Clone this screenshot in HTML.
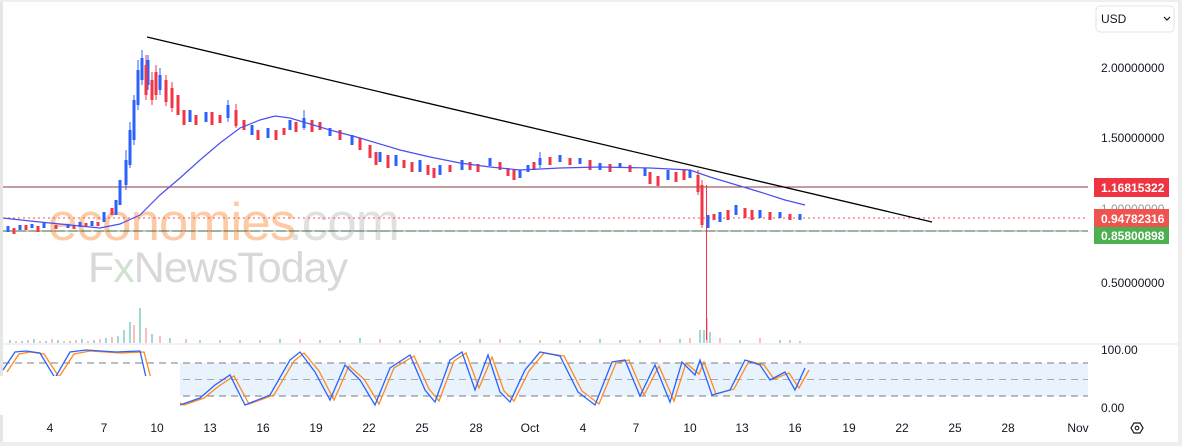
<!DOCTYPE html>
<html><head><meta charset="utf-8"><style>
html,body{margin:0;padding:0;background:#fff;width:1182px;height:446px;overflow:hidden;font-family:"Liberation Sans",Arial,sans-serif}
svg{position:absolute;left:0;top:0}
</style></head><body>
<svg width="1182" height="446" xmlns="http://www.w3.org/2000/svg" font-family="Liberation Sans, Arial, sans-serif">
<rect x="0" y="0" width="3" height="446" fill="#e6e6e6"/>
<rect x="0" y="0" width="1182" height="2" fill="#eee"/>
<rect x="1178" y="0" width="4" height="446" fill="#eee"/>
<rect x="0" y="442" width="1182" height="4" fill="#eee"/>
<line x1="3" y1="344" x2="1178" y2="344" stroke="#e0e3eb"/>
<rect x="180" y="363" width="908" height="33" fill="#e8f3fd"/>
<line x1="3" y1="363" x2="1088" y2="363" stroke="#787b86" stroke-dasharray="7,5"/>
<line x1="3" y1="379.5" x2="1088" y2="379.5" stroke="#aaa" stroke-dasharray="7,5"/>
<line x1="3" y1="396" x2="1088" y2="396" stroke="#787b86" stroke-dasharray="7,5"/>
<!-- volume -->
<path fill="none" stroke="#80cbc4" stroke-width="1.5" d="M10 343V340M22 343V341M34 343V339M46 343V341M58 343V340M70 343V341M82 343V339M94 343V340M106 343V338M118 343V336M124 343V330M130 343V322M140 343V308M152 343V334M170 343V338M200 343V340M240 343V340M280 343V339M320 343V340M360 343V338M400 343V340M440 343V340M480 343V339M520 343V340M560 343V340M600 343V339M640 343V340M680 343V339M700 343V330M704 343V330M710 343V332M740 343V340M780 343V340M800 343V341"/>
<path fill="none" stroke="#f7a9a7" stroke-width="1.5" d="M16 343V341M28 343V340M40 343V341M52 343V339M64 343V341M76 343V340M88 343V341M100 343V339M112 343V337M134 343V325M146 343V328M160 343V336M186 343V339M220 343V340M260 343V340M300 343V339M340 343V340M380 343V339M420 343V340M460 343V340M500 343V339M540 343V340M580 343V340M620 343V340M660 343V339M690 343V338M707 343V318M720 343V338M760 343V338M790 343V340"/>
<!-- stoch -->
<polyline fill="none" stroke="#ff8a1e" stroke-width="1.3" points="7,372 19,354 30,352 44,354 59,377 74,354 90,351 120,353 144,352 154,390 184,405 204,398 219,386 234,376 249,404 274,395 294,361 304,353 319,371 334,400 349,366 364,379 379,404 394,368 414,356 429,389 439,401 454,361 466,353 479,388 492,357 504,391 514,401 529,371 544,353 564,356 582,391 599,404 616,363 629,360 644,395 659,366 674,401 686,363 699,374 704,362 716,394 734,389 749,361 764,365 774,379 789,373 799,388 809,370"/>
<polyline fill="none" stroke="#2962ff" stroke-width="1.3" points="3,370 15,352 26,351 40,353 55,378 70,352 86,350 116,352 140,351 150,395 180,405 200,398 215,385 230,375 245,405 270,395 290,360 300,352 315,372 330,400 345,365 360,380 375,405 390,368 410,355 425,390 435,402 450,360 462,352 475,390 488,355 500,392 510,402 525,370 540,352 560,356 578,392 595,405 612,362 625,360 640,396 655,365 670,402 682,362 695,375 700,360 712,395 730,390 745,360 760,365 770,380 785,372 795,390 805,368"/>
<rect x="0" y="376" width="180" height="39" fill="#fff"/>
<g opacity="0.45">
<text x="48" y="240" font-size="53" fill="#fb8c3c" letter-spacing="-1">economies</text>
<text x="288" y="240" font-size="53" fill="#bbb" letter-spacing="-1">.com</text>
<text x="88" y="282" font-size="43" fill="#aaa" letter-spacing="-1">F<tspan fill="#9ac09a">x</tspan>NewsToday</text>
</g>
<line x1="3" y1="187" x2="1088" y2="187" stroke="#e03b45"/>
<line x1="3" y1="218" x2="1088" y2="218" stroke="#ef5350" stroke-dasharray="2,3"/>
<line x1="3" y1="231" x2="1088" y2="231" stroke="#43a047" stroke-dasharray="10,3"/>
<line x1="3" y1="187" x2="1088" y2="187" stroke="#333" stroke-opacity="0.5"/>
<line x1="3" y1="231" x2="1088" y2="231" stroke="#333" stroke-opacity="0.5"/>
<!-- wicks -->
<path fill="none" stroke="#2962ff" stroke-width="1" d="M126 150V190M130 122V168M134 95V145M138 60V110M142 50V85M148 55V90M160 68V95M228 100V122M304 110V130M540 152V168"/>
<path fill="none" stroke="#f23645" stroke-width="1" d="M146 55V100M152 72V105M156 65V100M166 75V106M172 82V112M236 104V128M698 170V195M702 180V228M706.5 185V340"/>
<!-- bodies -->
<path fill="none" stroke="#2962ff" stroke-width="3" d="M8 226V232M20 225V230M32 224V228M44 223V228M68 224V228M80 222V227M92 221V226M104 212V222M116 200V215M120 180V205M126 160V185M130 130V165M134 100V140M138 70V105M142 58V80M148 60V85M160 75V90M190 110V122M206 112V122M228 105V118M252 125V135M268 128V138M290 120V130M304 118V128M330 128V136M352 135V145M380 152V162M396 155V166M420 160V172M440 165V175M462 160V170M490 158V166M520 170V178M528 165V172M540 158V165M560 155V162M580 158V164M600 163V170M620 163V168M645 168V176M668 170V180M690 170V178M708 215V228M720 212V222M736 205V215M760 210V218M780 212V218M800 214V220"/>
<path fill="none" stroke="#f23645" stroke-width="3" d="M14 228V234M26 225V230M38 226V232M56 225V229M74 225V229M86 223V227M98 222V226M112 208V215M146 65V95M152 80V100M156 72V95M166 80V102M172 88V108M178 95V115M184 110V125M196 115V125M212 112V125M220 115V123M236 110V126M244 120V130M258 130V140M276 130V140M284 128V135M296 122V132M312 120V132M320 122V130M340 130V140M360 138V150M370 145V158M376 152V165M388 155V168M404 160V168M412 162V172M428 165V175M434 168V178M450 165V172M470 162V170M478 164V172M500 162V170M508 168V176M514 170V180M534 162V170M550 157V165M570 158V165M590 160V170M610 164V172M630 165V172M650 172V184M658 176V186M676 172V182M684 170V180M698 175V192M702 185V225M714 214V220M728 210V220M745 208V218M752 210V220M770 212V220M790 214V220"/>
<polyline fill="none" stroke="#4b4ff0" stroke-width="1.2" points="3,218 30,221 60,224 100,228 120,224 140,215 160,195 180,178 200,160 220,143 240,128 260,120 275,116 290,118 310,124 330,130 360,138 400,150 430,157 460,163 490,167 520,170 560,168 600,167 650,168 690,170 710,177 730,183 760,192 785,200 805,205"/>
<line x1="147" y1="37" x2="932" y2="222" stroke="#000" stroke-width="1.3"/>
<rect x="1096" y="6" width="78" height="26" rx="4" fill="#fff" stroke="#e0e3eb"/>
<text x="1101" y="23" font-size="12" fill="#131722">USD</text>
<path d="M1164 17l3 3 3-3" fill="none" stroke="#131722" stroke-width="1.2"/>
<g font-size="12" fill="#131722">
<text x="1101" y="72">2.00000000</text>
<text x="1101" y="142">1.50000000</text>
<text x="1101" y="287">0.50000000</text>
<text x="1101" y="213" fill="#999">1.00000000</text>
<text x="1101" y="354">100.00</text>
<text x="1101" y="412">0.00</text>
</g>
<rect x="1094" y="178" width="75" height="19" fill="#ef3340"/>
<text x="1101" y="192" font-size="12" font-weight="bold" fill="#fff">1.16815322</text>
<rect x="1094" y="209" width="75" height="19" fill="#ef5350"/>
<text x="1101" y="223" font-size="12" font-weight="bold" fill="#fff">0.94782316</text>
<rect x="1094" y="227" width="75" height="17" fill="#4caf50"/>
<text x="1101" y="240" font-size="12" font-weight="bold" fill="#fff">0.85800898</text>
<g font-size="12" fill="#131722" text-anchor="middle">
<text x="50" y="432">4</text><text x="104" y="432">7</text><text x="157" y="432">10</text><text x="210" y="432">13</text><text x="263" y="432">16</text><text x="316" y="432">19</text><text x="369" y="432">22</text><text x="422" y="432">25</text><text x="476" y="432">28</text><text x="530" y="432">Oct</text><text x="583" y="432">4</text><text x="636" y="432">7</text><text x="690" y="432">10</text><text x="742" y="432">13</text><text x="795" y="432">16</text><text x="849" y="432">19</text><text x="902" y="432">22</text><text x="955" y="432">25</text><text x="1008" y="432">28</text><text x="1078" y="432">Nov</text>
</g>
<path d="M1131 428l3-5h6l3 5-3 5h-6z" fill="none" stroke="#131722" stroke-width="1.2"/>
<circle cx="1137" cy="428" r="1.8" fill="none" stroke="#131722" stroke-width="1.1"/>
</svg>
</body></html>
